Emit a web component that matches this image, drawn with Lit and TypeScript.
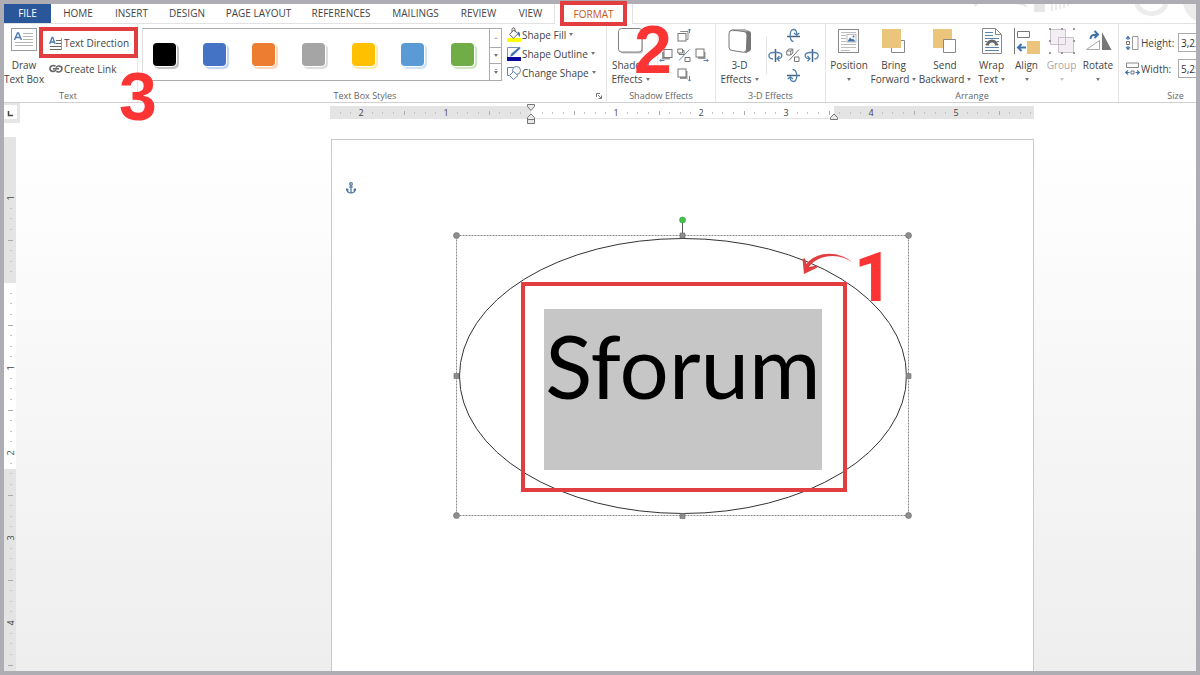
import { LitElement, html, svg, css, nothing } from "lit";
import { customElement, property } from "lit/decorators.js";

const icons: Record<string, unknown> = {
  drawText: svg`<svg width="26" height="24" viewBox="0 0 26 24" fill="none">
    <rect x="0.5" y="0.5" width="25" height="22" fill="#fff" stroke="#9a9a9a"/>
    <path d="M3.5 12 6.5 5h1l3 7M4.7 9.5h4.6" stroke="#4a7ab0" stroke-width="1.4"/>
    <path d="M12 5.500h10M12 8.500h10M12 11.500h10M4 14.500h18M4 17.500h18" stroke="#b5b5b5"/></svg>`,
  textDir: svg`<svg width="14" height="14" viewBox="0 0 14 14" fill="none">
    <path d="M0.700 8 3 1.500h.8L6.100 8M1.600 6h3.600" stroke="#4a7ab0" stroke-width="1.300"/>
    <path d="M7 4.500h6M7 7.500h6M1 10.500h12M1 13.500h12" stroke="#666"/><path d="M12.500 2v12" stroke="#999"/></svg>`,
  link: svg`<svg width="14" height="10" viewBox="0 0 14 10" fill="none" stroke="#666" stroke-width="1.600">
    <path d="M6.500 2.300C5 1 1 1.300 1 4.600s4.500 3.600 6 1.200"/><path d="M7.300 7.300C9 8.500 13 8 13 4.800S8.500 1.200 7 3.600"/><path d="M4 4.800h6"/></svg>`,
  fill: svg`<svg width="15" height="16" viewBox="0 0 15 16" fill="none">
    <rect x="0" y="11" width="14" height="4" fill="#ffff00"/>
    <path d="M2.500 7.500 7 2.800l4 4-4.500 4.400z" fill="#fff" stroke="#666"/><path d="M5 5V2.200C5 .3 8 .3 8 2.200v3" stroke="#666"/>
    <path d="M10.500 4.500c2.500.3 3 2 2.300 5.500-1.200-1-1.800-2.300-1.800-3.500z" fill="#4472a8"/></svg>`,
  outline: svg`<svg width="15" height="16" viewBox="0 0 15 16" fill="none">
    <path d="M11.500 1.500H.5v10" stroke="#7a93b5"/><path d="M13.500 2 6 9.300l-2.500 1 1-2.500L12.500 1" fill="#3f72ab" stroke="#3f72ab" stroke-width=".6"/>
    <rect x="0" y="11" width="14" height="4" fill="#0a0a9c"/></svg>`,
  change: svg`<svg width="15" height="16" viewBox="0 0 15 16" stroke="#5f83ab" fill="none">
    <path d="M.5 2.500h6v8h-6z"/><circle cx="9.500" cy="5.500" r="4" fill="#fff"/><path d="m6.500 6.500 4.500 4-4.500 4-4-4z" fill="#fff"/></svg>`,
  shadow: svg`<svg width="26" height="26" viewBox="0 0 26 26"><rect x="2" y="2.500" width="23" height="23" rx="3" fill="#c4c4c4"/>
    <rect x="0.500" y="0.500" width="23.500" height="23.500" rx="3" fill="#fff" stroke="#808080"/></svg>`,
  threeD: svg`<svg width="24" height="26" viewBox="0 0 24 26"><path d="M4 1h12l6 2.500q1 .5 1 2V21q0 1.500-1.500 2.200L18 25l-3-1z" fill="#777"/>
    <path d="M4 1h12l5.500 2-4 .5L3 2.500z" fill="#b5b5b5"/><path d="M4.500 2.200 16 3.500q3 .5 3 3.500l-.5 14q0 3.500-3 3.200L4 22.500q-3-.3-3-3.500V5.500q0-3.500 3.500-3.300z" fill="#fff" stroke="#777"/></svg>`,
  sUp: svg`<svg width="14" height="14" viewBox="0 0 14 14" fill="none"><path d="M3.500 4V3.500h7.500v8H9.500" stroke="#888"/><rect x="1" y="5.500" width="8" height="7.500" fill="#fff" stroke="#777"/><path d="M12.500 5V1M11 2.700l1.500-1.700L14 2.700" stroke="#5a84b3"/></svg>`,
  sLeft: svg`<svg width="14" height="14" viewBox="0 0 14 14" fill="none"><path d="M4 4v6.500h7" stroke="#999" stroke-width="2"/><rect x="5" y="1.500" width="8" height="8" fill="#fff" stroke="#777"/><path d="M5.500 12.500H.8M2.500 10.800.8 12.500 2.500 14" stroke="#5a84b3"/></svg>`,
  sMid: svg`<svg width="14" height="14" viewBox="0 0 14 14" fill="none" stroke="#777"><path d="M2 2.500h5v4H2z"/><path d="M.8 1h4.700v4H.8z" fill="#fff"/><path d="M12.500 1.500 2 12.500" stroke="#6488ad"/><path d="M8 9.500h5v4H8z"/></svg>`,
  sRight: svg`<svg width="14" height="14" viewBox="0 0 14 14" fill="none"><path d="M9.500 4v6H3" stroke="#999" stroke-width="2"/><rect x="1" y="1" width="8" height="8" fill="#fff" stroke="#777"/><path d="M8.500 12.500h4.700M11.500 10.800l1.700 1.700-1.700 1.500" stroke="#5a84b3"/></svg>`,
  sDown: svg`<svg width="14" height="14" viewBox="0 0 14 14" fill="none"><path d="M9.500 3v7H3" stroke="#999" stroke-width="2"/><rect x="1" y="1" width="8" height="8" fill="#fff" stroke="#777"/><path d="M12.500 8v5M11 11.500l1.500 1.700 1.500-1.700" stroke="#5a84b3"/></svg>`,
  tUp: svg`<svg width="15" height="15" viewBox="0 0 15 15" fill="none" stroke="#4f80ad" stroke-width="1.300"><path d="M1 8.500h13" stroke="#44647f" stroke-width="1.500"/><path d="M7.500 13.500C3 13.500 3 1.500 7.500 1.500c2.500 0 3.300 2 3.300 5M8 5l2.700 2.200L13.300 5"/></svg>`,
  tDown: svg`<svg width="15" height="15" viewBox="0 0 15 15" fill="none" stroke="#4f80ad" stroke-width="1.300"><path d="M1 7.500h13" stroke="#44647f" stroke-width="1.500"/><path d="M6.500 1.500c5.500 0 5.500 12 1 12-2.500 0-3.300-2-3.300-4.500M1.800 11 4.300 8.800 7 11"/></svg>`,
  tLeft: svg`<svg width="15" height="15" viewBox="0 0 15 15" fill="none" stroke="#4f80ad" stroke-width="1.300"><path d="M7.500 1v13" stroke="#44647f" stroke-width="1.500"/><path d="M5 11C-.5 10.500-.5 4.500 5 4.500h4.500c6 .5 5.500 6 0 6.200M11.500 8 9 10.700l2.500 2.500"/></svg>`,
  tRight: svg`<svg width="15" height="15" viewBox="0 0 15 15" fill="none" stroke="#4f80ad" stroke-width="1.300"><path d="M8.500 1v13" stroke="#44647f" stroke-width="1.500"/><path d="M10.500 11c5-.5 5-6.500 0-6.500H5.500c-6 .5-5.500 6 0 6.200M3.500 8 6 10.700l-2.500 2.500"/></svg>`,
  tMid: svg`<svg width="14" height="14" viewBox="0 0 14 14" fill="none" stroke="#777"><path d="M.8 3h4v4h-4zM.8 3l2-2h4v4l-2 2M4.800 3l2-2"/><path d="M13 1.500 3 12.500"/><path d="M8.500 9h4.500v4.500H8.500z"/></svg>`,
  position: svg`<svg width="22" height="26" viewBox="0 0 22 26" fill="none"><rect x="0.500" y="1.500" width="20" height="23" fill="#fff" stroke="#888"/>
    <path d="M3 4.500h15M3 7.500h5M3 10.500h5M3 13.500h5M3 16.500h15M3 19.500h15M3 22.500h9" stroke="#bbb"/><rect x="9" y="6.500" width="9" height="7.500" fill="#fff" stroke="#bbb"/><path d="m9.500 13.500 2.500-4 2 2 1-1 2.500 3z" fill="#3f72ab"/><circle cx="15.500" cy="8.500" r="1" fill="#3f72ab"/></svg>`,
  forward: svg`<svg width="24" height="26" viewBox="0 0 24 26"><path d="M9.500 12.500h13v12h-13z" fill="#fff" stroke="#888"/><path d="M0 1h19v19H0z" fill="#ecc57c"/></svg>`,
  backward: svg`<svg width="24" height="26" viewBox="0 0 24 26"><path d="M0 1h19v19H0z" fill="#ecc57c"/><path d="M10.500 11.500h12v13h-12z" fill="#fff" stroke="#888"/></svg>`,
  wrap: svg`<svg width="20" height="26" viewBox="0 0 20 26" fill="none"><path d="M.5.500h13l6 6v19H.5z" fill="#fff" stroke="#888"/><path d="M13.500.5v6h6" stroke="#888"/>
    <path d="M3 4.500h8M3 7.500h8M3 10.500h14M3 13.500h2M15 13.500h2M3 19.500h14M3 22.500h14" stroke="#5c84b0"/><path d="M3.500 16.500h2M14.500 16.500h2" stroke="#5c84b0"/><path d="M5.500 17.500c0-6 9-6 9 0" stroke="#666" stroke-width="3"/></svg>`,
  align: svg`<svg width="26" height="26" viewBox="0 0 26 26" fill="none"><path d="M.5 0v26" stroke="#777"/><path d="M3.500 3.500h12v6h-12z" fill="#fff" stroke="#777"/><path d="M13 13h13v13H13z" fill="#ecc57c"/><path d="M12 19.500H4M7.500 16 4 19.500 7.500 23" stroke="#3f72ab" stroke-width="2"/></svg>`,
  group: svg`<svg width="26" height="26" viewBox="0 0 26 26"><g fill="#f3edf4" stroke="#c9c0ca"><path d="M1.500 1.500h15v15h-15z"/><path d="M9.500 9.500h15v15h-15z"/><path d="M9.500 9.500h7v7h-7z"/></g>
    <g fill="#999"><path d="M0 0h2v2H0zM12 0h2v2h-2zM24 0h2v2h-2zM0 12h2v2H0zM0 24h2v2H0zM12 24h2v2h-2zM24 24h2v2h-2zM24 12h2v2h-2z"/></g></svg>`,
  rotate: svg`<svg width="27" height="26" viewBox="0 0 27 26" fill="none"><path d="M1.500 21.500h13v-9z" stroke="#aaa" fill="#fff"/><path d="M17 4v18h9.500z" fill="#777"/><path d="M5.500 11c0-3.500 2.500-4.500 6.500-4.300M9.500 3l3.500 3.600L9.500 10" stroke="#3f72ab" stroke-width="2"/></svg>`,
  height: svg`<svg width="14" height="14" viewBox="0 0 14 14" fill="none"><path d="M7.500.5h5.500v13H7.500z" stroke="#999"/><path d="M3 1v3M3 10v3M1 3l2-2.500L5 3M1 11l2 2.500L5 11" stroke="#3f72ab" stroke-width="1.200"/><path d="M1.500 5.500h3v3h-3z" stroke="#777"/></svg>`,
  width: svg`<svg width="15" height="14" viewBox="0 0 15 14" fill="none"><path d="M1.500 1h12v4.500h-12z" stroke="#888"/><path d="M1 10.500h3.500M10.500 10.500H14M3 8.500l-2.500 2 2.500 2M12 8.500l2.500 2-2.500 2" stroke="#3f72ab" stroke-width="1.200"/><path d="M6 9h3v3H6z" stroke="#777"/></svg>`,
  anchor: svg`<svg width="10" height="12" viewBox="0 0 10 12" fill="none" stroke="#47739c" stroke-width="1.200"><circle cx="5" cy="2" r="1.300"/><path d="M5 3.500V11M3 5h4M.8 7c.2 2.500 2 4 4.200 4s4-1.500 4.200-4M0 8.500.8 7l1.700 1.200M10 8.500 9.200 7 7.500 8.200"/></svg>`,
};

const TABS = ["HOME", "INSERT", "DESIGN", "PAGE LAYOUT", "REFERENCES", "MAILINGS", "REVIEW", "VIEW"];

const SWATCHES = [
  ["#000000", "#c4c4c4"],
  ["#4472c4", "#c3d7f5"],
  ["#ed7d31", "#fad7bb"],
  ["#a5a5a5", "#dedede"],
  ["#ffc000", "#fdebb0"],
  ["#5b9bd5", "#cfe3f7"],
  ["#70ad47", "#d0e6c2"],
];

const ARRANGE: [string, string, string, boolean][] = [
  ["position", "Position", "", false],
  ["forward", "Bring", "Forward", false],
  ["backward", "Send", "Backward", false],
  ["wrap", "Wrap", "Text", false],
  ["align", "Align", "", false],
  ["group", "Group", "", true],
  ["rotate", "Rotate", "", false],
];

@customElement("big-button")
class BigButton extends LitElement {
  @property() icon = "";
  @property() top = "";
  @property() bottom = "";
  @property({ type: Boolean }) menu = false;
  @property({ type: Boolean }) off = false;

  static styles = css`
    :host { display: block; }
    button {
      display: flex; flex-direction: column; align-items: center;
      width: 100%; padding: 4px 0 0; border: 0; background: none;
      color: #444; font: 10px/14px "Open Sans", sans-serif; white-space: nowrap;
    }
    button:disabled { color: #a6a6a6; }
    .pic { display: flex; justify-content: center; height: 30px; }
    .line { display: flex; align-items: center; justify-content: center; gap: 3px; height: 14px; }
    .caret { border: 2px solid transparent; border-top: 3px solid #777; border-bottom: 0; }
    button:disabled .caret { border-top-color: #c4c4c4; }
  `;

  render() {
    return html`<button ?disabled=${this.off}>
      <span class="pic">${icons[this.icon]}</span>
      <span class="line">${this.top}</span>
      <span class="line">${this.bottom}${this.menu ? html`<i class="caret"></i>` : nothing}</span>
    </button>`;
  }
}

@customElement("h-ruler")
class HRuler extends LitElement {
  static styles = css`
    :host { display: block; }
    svg { display: block; overflow: visible; }
    text { font: 9px "Open Sans", sans-serif; fill: #444; text-anchor: middle; }
  `;

  render() {
    const zero = 201;
    const marks = [];
    for (let i = -18; i <= 47; i++) {
      if (i === 0) continue;
      const x = zero + Math.round((i * 85) / 8);
      if (i % 8 === 0) marks.push(svg`<text x=${x} y="11">${Math.abs(i / 8)}</text>`);
      else if (i % 4 === 0) marks.push(svg`<path d="M${x}.5 6v4" stroke="#aaa"/>`);
      else marks.push(svg`<path d="M${x}.5 7v2" stroke="#c4c4c4"/>`);
    }
    return html`<svg width="704" height="22" viewBox="0 0 704 22">
      <rect x="0" y="1" width="704" height="13" fill="#e4e4e4" />
      <rect x="201" y="1" width="303" height="12" fill="#fff" />
      ${marks}
      <g fill="#e9e9e9" stroke="#777">
        <path d="M197.500 -0.500h7v2l-3.500 4-3.500-4z" />
        <path d="M197.500 12.500l3.500-3.500 3.500 3.500v6h-7zM197.500 14.500h7" />
        <path d="M500.500 14.500v-2l3.500-3.500 3.500 3.500v2z" />
      </g>
    </svg>`;
  }
}

@customElement("v-ruler")
class VRuler extends LitElement {
  static styles = css`
    :host { display: block; background: #e4e4e4; }
    svg { display: block; }
    text { font: 9px "Open Sans", sans-serif; fill: #444; text-anchor: middle; }
  `;

  render() {
    const zero = 145;
    const marks = [];
    for (let i = -8; i <= 36; i++) {
      if (i === 0) continue;
      const y = zero + Math.round((i * 85) / 8);
      if (i % 8 === 0) marks.push(svg`<text transform="translate(10 ${y + 1}) rotate(-90)">${Math.abs(i / 8)}</text>`);
      else if (i % 4 === 0) marks.push(svg`<path d="M4 ${y}.5h5" stroke="#aaa"/>`);
      else marks.push(svg`<path d="M6 ${y}.5h2" stroke="#c4c4c4"/>`);
    }
    return html`<svg width="12" height="534" viewBox="0 0 12 534">
      <rect x="0" y="146" width="12" height="186" fill="#fff" />
      ${marks}
    </svg>`;
  }
}

@customElement("app-root")
class AppRoot extends LitElement {
  static styles = css`
    :host { display: block; font: 10px/14px "Open Sans", sans-serif; color: #444; }
    * { box-sizing: border-box; }
    button { font: inherit; color: inherit; border: 0; background: none; padding: 0; white-space: nowrap; }
    svg { display: block; flex: none; }
    .frame {
      position: relative; display: flex; flex-direction: column;
      min-height: 100vh; border: 4px solid #aeadb3; background: #fff;
    }
    .app { flex: 1; display: flex; flex-direction: column; min-width: 0; overflow: hidden; }
    .tabs {
      display: grid; height: 20px; border-bottom: 1px solid #e2e2e2;
      grid-template-columns: 47px 54px 53px 58px 85px 80px 69px 57px 47px 79px 1fr;
    }
    .tabs .file { background: #2a579a; color: #fff; }
    .tabs button { height: 19px; padding-bottom: 1px; }
    .tabs .active {
      height: 20px; color: #c55a11; background: #fff;
      border-left: 1px solid #e2e2e2; border-right: 1px solid #e2e2e2;
    }
    .art { justify-self: end; }
    .ribbon {
      display: grid; height: 79px; border-bottom: 1px solid #d0d0d0;
      grid-template-columns: 134px 469px 109px 110px 293px minmax(113px, 1fr);
    }
    .group { display: flex; flex-direction: column; min-width: 0; border-right: 1px solid #e6e6e6; }
    .group:last-child { border-right: 0; }
    .body { display: flex; height: 65px; }
    .name { position: relative; font-size: 9px; line-height: 13px; text-align: center; color: #666; }
    .text .name { padding-right: 5px; }
    .styles .name { padding-right: 14px; }
    .launch { position: absolute; right: 4px; top: 4px; }
    .rows { display: flex; flex-direction: column; gap: 12px; padding: 12px 0 0 5px; }
    .row { display: flex; align-items: center; gap: 1px; height: 14px; }
    .row .ico { display: flex; width: 14px; }
    .draw { width: 40px; }
    .gallery {
      display: flex; width: 360px; height: 53px; margin: 4px 0 0 4px;
      border: 1px solid #ababab; border-left-color: #e0e0e0;
    }
    .swatches { flex: 1; display: flex; align-items: center; justify-content: space-between; padding: 0 15px 0 10px; }
    .swatch { width: 23px; height: 23px; border-radius: 4px; }
    .steps { display: grid; width: 12px; grid-template-rows: 18px 16px 17px; border-left: 1px solid #ababab; }
    .steps button { display: grid; place-items: center; }
    .steps button + button { border-top: 1px solid #ababab; }
    .caret { border: 2px solid transparent; border-top: 3px solid #777; border-bottom: 0; }
    .caret.up { border-top: 0; border-bottom: 2px solid #bbb; }
    .caret.bar { box-shadow: 0 -3px 0 -1px #999; }
    .menu { display: flex; flex-direction: column; padding: 1px 0 0 5px; }
    .menu .row { height: 19px; }
    .menu .caret { margin-left: 2px; }
    .effect { width: 47px; }
    .nudge {
      display: grid; grid-template-columns: repeat(3, 18px); grid-template-rows: repeat(3, 20px);
      height: 62px; margin-left: 3px; padding-top: 1px;
    }
    .nudge button { display: grid; place-items: center; }
    .nudge button:nth-child(1) { grid-area: 1 / 2; }
    .nudge button:nth-child(2) { grid-area: 2 / 1; }
    .nudge button:nth-child(3) { grid-area: 2 / 2; }
    .nudge button:nth-child(4) { grid-area: 2 / 3; }
    .nudge button:nth-child(5) { grid-area: 3 / 2; }
    .nudge::before {
      content: ""; grid-area: 1 / 1 / 4 / 2; height: 38px; margin-top: 11px;
      border-left: 1px solid #e6e6e6;
    }
    .arrange { display: grid; padding-left: 2px; grid-template-columns: 42px 47px 56px 37px 33px 37px 36px; }
    .size { display: flex; flex-direction: column; gap: 7px; padding: 9px 0 0 6px; }
    .field { display: grid; grid-template-columns: 16px 37px 48px; align-items: center; height: 19px; }
    .field input {
      height: 19px; width: 48px; padding: 0 2px; border: 1px solid #ababab;
      font: inherit; color: #333; background: #fff;
    }
    .top {
      display: grid; height: 34px; grid-template-columns: 16px 1fr 704px 162px;
    }
    .stop { height: 20px; width: 16px; padding: 2px 3px 4px 0; background: #e6e6e6; }
    .stop span { display: block; height: 14px; background: #fff; }
    .top h-ruler { grid-column: 3; margin-top: 2px; }
    .work {
      flex: 1; display: grid; grid-template-columns: 16px 1fr 704px 162px;
      background: linear-gradient(#fff, #eeeeee);
    }
    .work v-ruler { width: 12px; }
    .page {
      grid-column: 3; position: relative; margin: 2px 0 0 1px; background: #fff;
      border: 1px solid #c9c9c9; border-bottom: 0;
    }
    .anchor { position: absolute; left: 14px; top: 42px; }
    .shape { position: absolute; left: 120px; top: 74px; }
    .word {
      position: absolute; left: 212px; top: 169px; width: 278px; height: 161px; margin: 0;
      background: #c6c6c6; color: #000; text-align: center; font: 87px/113px Lato, sans-serif;
    }
    .mark { position: absolute; border: 4px solid #e23e40; pointer-events: none; }
    .mark.word-box { left: 189px; top: 142px; width: 326px; height: 210px; }
    .mark.tab-box { left: 556px; top: -3px; width: 67px; height: 25px; }
    .mark.dir-box { left: 35px; top: 23px; width: 99px; height: 31px; }
    .num {
      position: absolute; color: #fd3434; pointer-events: none;
      font: bold 68px/68px "Liberation Sans", sans-serif;
    }
    .num.one { left: 522px; top: 104px; font-family: Roboto, sans-serif; }
    .num.two { left: 630px; top: 11px; }
    .num.three { left: 115px; top: 58px; }
    .arrow { position: absolute; left: 468px; top: 112px; }
  `;

  private row(icon: string, label: string, menu = false) {
    return html`<button class="row"><span class="ico">${icons[icon]}</span>${label}${menu
      ? html`<i class="caret"></i>` : nothing}</button>`;
  }

  private nudge(names: [string, string][]) {
    return html`<div class="nudge">${names.map(
      ([n, label]) => html`<button aria-label=${label}>${icons[n]}</button>`)}</div>`;
  }

  render() {
    return html`<div class="frame"><div class="app">
      <nav class="tabs">
        <button class="file">FILE</button>
        ${TABS.map((t) => html`<button>${t}</button>`)}
        <button class="active">FORMAT</button>
        <svg class="art" width="230" height="19" viewBox="0 0 230 19" fill="none">
          <path d="M8 0h4l-3 3z" fill="#e6e6e6" /><path d="M51 0h8l3 3zM68 0h11v8H68z" fill="#e6e6e6" />
          <path d="M86 0v7M90 0v6M94 0v5M98 0v4M102 0v2" stroke="#ebebeb" stroke-width="2" />
          <path d="M171 0a15 13 0 0 0 29 0" stroke="#ececec" stroke-width="5" />
          <path d="M217 0q3 12 13 17V0z" fill="#ececec" />
        </svg>
      </nav>

      <div class="ribbon">
        <section class="group text">
          <div class="body">
            <big-button class="draw" icon="drawText" top="Draw" bottom="Text Box"></big-button>
            <div class="rows">${this.row("textDir", "Text Direction")}${this.row("link", "Create Link")}</div>
          </div>
          <div class="name">Text</div>
        </section>

        <section class="group styles">
          <div class="body">
            <div class="gallery">
              <div class="swatches">${SWATCHES.map(([c, s]) => html`<button class="swatch" aria-label="Style"
                style="background:${c};box-shadow:0 0 0 1px #fff,2px 2px 0 1px ${s}"></button>`)}</div>
              <div class="steps">
                <button aria-label="Previous"><i class="caret up"></i></button>
                <button aria-label="Next"><i class="caret"></i></button>
                <button aria-label="More"><i class="caret bar"></i></button>
              </div>
            </div>
            <div class="menu">
              ${this.row("fill", "Shape Fill", true)}${this.row("outline", "Shape Outline", true)}${this.row("change", "Change Shape", true)}
            </div>
          </div>
          <div class="name">Text Box Styles
            <svg class="launch" width="6" height="6" viewBox="0 0 6 6" fill="none" stroke="#777"><path d="M.5 4V.5H4M2 2l3 3M5.500 2.500v3h-3" /></svg>
          </div>
        </section>

        <section class="group">
          <div class="body">
            <big-button class="effect" icon="shadow" top="Shadow" bottom="Effects" menu></big-button>
            ${this.nudge([["sUp", "Nudge up"], ["sLeft", "Nudge left"], ["sMid", "Shadow on/off"], ["sRight", "Nudge right"], ["sDown", "Nudge down"]])}
          </div>
          <div class="name">Shadow Effects</div>
        </section>

        <section class="group">
          <div class="body">
            <big-button class="effect" icon="threeD" top="3-D" bottom="Effects" menu></big-button>
            ${this.nudge([["tUp", "Tilt up"], ["tLeft", "Tilt left"], ["tMid", "3-D on/off"], ["tRight", "Tilt right"], ["tDown", "Tilt down"]])}
          </div>
          <div class="name">3-D Effects</div>
        </section>

        <section class="group">
          <div class="body arrange">${ARRANGE.map(([i, a, b, off]) => html`
            <big-button icon=${i} top=${a} bottom=${b} menu ?off=${off}></big-button>`)}
          </div>
          <div class="name">Arrange</div>
        </section>

        <section class="group">
          <div class="body size">
            <label class="field">${icons.height}<span>Height:</span><input .value=${'3,23"'} /></label>
            <label class="field">${icons.width}<span>Width:</span><input .value=${'5,25"'} /></label>
          </div>
          <div class="name">Size</div>
        </section>
      </div>

      <div class="top">
        <button class="stop" aria-label="Tab stop"><span>
          <svg width="13" height="14" viewBox="0 0 13 14"><path d="M4.500 6v4.500H9" fill="none" stroke="#444" stroke-width="1.500" /></svg>
        </span></button>
        <h-ruler></h-ruler>
      </div>

      <main class="work">
        <v-ruler></v-ruler>
        <article class="page">
          <div class="anchor">${icons.anchor}</div>
          <svg class="shape" width="462" height="310" viewBox="0 0 462 310" fill="none">
            <path d="M4.500 21.500h452v280h-452z" stroke="#888" stroke-dasharray="2 1" />
            <ellipse cx="231" cy="162" rx="223.500" ry="137.500" stroke="#333" />
            <path d="M230.500 9v12" stroke="#555" /><circle cx="230.500" cy="6" r="3" fill="#44c24b" stroke="#389e3e" stroke-width=".6" />
            <g fill="#8d8d8d" stroke="#6c6c6c" stroke-width=".6">
              <circle cx="4.500" cy="21.500" r="3" /><circle cx="456.500" cy="21.500" r="3" />
              <circle cx="4.500" cy="301.500" r="3" /><circle cx="456.500" cy="301.500" r="3" />
              <path d="M228 19h5v5h-5zM228 299.500h5v5h-5zM2 159.500h5v5H2zM454 159.500h5v5h-5z" />
            </g>
          </svg>
          <p class="word">Sforum</p>
          <div class="mark word-box"></div>
          <svg class="arrow" width="56" height="28" viewBox="0 0 56 28">
            <path d="M54 12C42 1 19 1 9 15l7.500-1.500.8 2L4 22 2.500 7l2.500-.7L6.500 12C17-2 42-1 54 12z" fill="#e23e40" />
          </svg>
          <span class="num one">1</span>
        </article>
      </main>
      </div>

      <div class="mark tab-box"></div>
      <div class="mark dir-box"></div>
      <span class="num two">2</span>
      <span class="num three">3</span>
    </div>`;
  }
}
